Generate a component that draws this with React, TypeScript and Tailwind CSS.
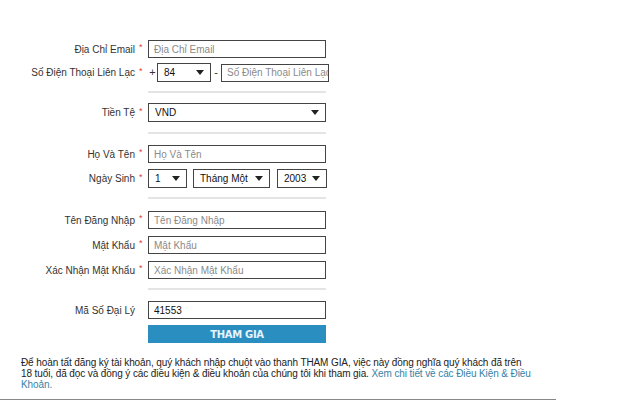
const font = { fontFamily: '"Liberation Sans", Arial, sans-serif' };

function Arrow() {
  return (
    <svg width="8" height="5" viewBox="0 0 8 5" className="shrink-0">
      <path d="M0 0 H8 L4 5 Z" fill="#222" />
    </svg>
  );
}

function Sel({ value, className }: { value: string; className: string }) {
  return (
    <div
      className={`flex h-[19px] items-center justify-between border border-[#444] bg-white pl-[6px] pr-[6px] text-[10px] text-[#111] ${className}`}
    >
      <span>{value}</span>
      <Arrow />
    </div>
  );
}

function Input({ placeholder, value, className = "w-[178px]" }: { placeholder?: string; value?: string; className?: string }) {
  return (
    <div
      className={`flex h-[18px] items-center overflow-hidden whitespace-nowrap border border-[#444] bg-white px-[5px] text-[10px] ${className}`}
    >
      {value ? <span className="text-[#111]">{value}</span> : <span className="text-[#8a8a8a]">{placeholder}</span>}
    </div>
  );
}

function Row({ label, req = true, mt, children }: { label: string; req?: boolean; mt: string; children: React.ReactNode }) {
  return (
    <div className={`flex items-center ${mt}`}>
      <div className="w-[135px] text-right text-[10px] text-[#333]">{label}</div>
      <div className="w-[13px] pb-[3px] pl-[4px] text-[9px] leading-none text-[#e04040]">{req ? "*" : ""}</div>
      {children}
    </div>
  );
}

function Sep({ mt }: { mt: string }) {
  return <div className={`ml-[148px] h-[2px] w-[178px] bg-[#e4e4e4] ${mt}`} />;
}

export default function App() {
  return (
    <div className="h-[400px] w-[640px] bg-white" style={font}>
      <div className="flex h-[400px] w-[556px] flex-col border-b border-[#888] pt-[40px]">
        <Row label="Địa Chỉ Email" mt="">
          <Input placeholder="Địa Chỉ Email" />
        </Row>
        <Row label="Số Điện Thoại Liên Lạc" mt="mt-[5px]">
          <span className="w-[9px] text-center text-[11px] text-[#333]">+</span>
          <Sel value="84" className="w-[54px]" />
          <span className="w-[10px] text-center text-[11px] text-[#333]">-</span>
          <Input placeholder="Số Điện Thoại Liên Lạc" className="w-[108px]" />
        </Row>
        <Sep mt="mt-[9px]" />
        <Row label="Tiền Tệ" mt="mt-[10px]">
          <Sel value="VND" className="w-[178px]" />
        </Row>
        <Sep mt="mt-[10px]" />
        <Row label="Họ Và Tên" mt="mt-[11px]">
          <Input placeholder="Họ Và Tên" />
        </Row>
        <Row label="Ngày Sinh" mt="mt-[6px]">
          <Sel value="1" className="w-[39px]" />
          <Sel value="Tháng Một" className="ml-[6px] w-[77px]" />
          <Sel value="2003" className="ml-[7px] w-[50px]" />
        </Row>
        <Sep mt="mt-[9px]" />
        <Row label="Tên Đăng Nhập" mt="mt-[12px]">
          <Input placeholder="Tên Đăng Nhập" />
        </Row>
        <Row label="Mật Khẩu" mt="mt-[7px]">
          <Input placeholder="Mật Khẩu" />
        </Row>
        <Row label="Xác Nhận Mật Khẩu" mt="mt-[7px]">
          <Input placeholder="Xác Nhận Mật Khẩu" />
        </Row>
        <Sep mt="mt-[9px]" />
        <Row label="Mã Số Đại Lý" req={false} mt="mt-[11px]">
          <Input value="41553" />
        </Row>
        <div className="ml-[148px] mt-[6px] flex h-[18px] w-[178px] items-center justify-center bg-[#2b8ec0]">
          <span
            className="text-[10px] font-bold tracking-[-0.3px] text-[#e6f4fb]"
            style={{ fontFamily: '"DejaVu Sans", Verdana, sans-serif' }}
          >
            THAM GIA
          </span>
        </div>
        <p className="mt-[14px] pl-[21px] text-[10px] leading-[11px] tracking-[-0.1px] text-[#222]">
          Để hoàn tất đăng ký tài khoản, quý khách nhập chuột vào thanh THAM GIA, việc này đồng nghĩa quý khách đã trên{" "}
          <br />
          18 tuổi, đã đọc và đồng ý các điều kiện &amp; điều khoản của chúng tôi khi tham gia.{" "}
          <a className="text-[#3682a6]">Xem chi tiết về các Điều Kiện &amp; Điều Khoản.</a>
        </p>
      </div>
    </div>
  );
}
